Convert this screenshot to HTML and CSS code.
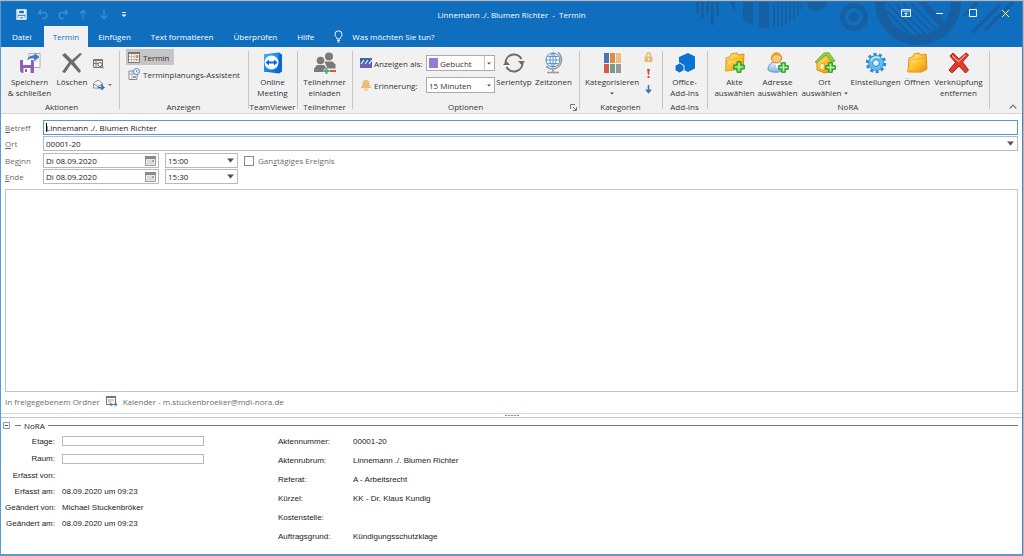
FILE: index.html
```html
<!DOCTYPE html>
<html lang="de">
<head>
<meta charset="utf-8">
<title>Linnemann ./. Blumen Richter - Termin</title>
<link rel="stylesheet" href="styles.css">
</head>
<body>
<svg class="defs" width="0" height="0" aria-hidden="true">
  <defs>
    <linearGradient id="gold" x1="0" y1="0" x2="1" y2="1"><stop offset="0" stop-color="#fff09a"/><stop offset=".5" stop-color="#fdc02c"/><stop offset="1" stop-color="#e58e10"/></linearGradient>
    <linearGradient id="tv" x1="0" y1="0" x2="1" y2="1"><stop offset="0" stop-color="#35b5fb"/><stop offset="1" stop-color="#0865dd"/></linearGradient>
    <linearGradient id="person" x1="0" y1="0" x2="0" y2="1"><stop offset="0" stop-color="#e4f1fc"/><stop offset="1" stop-color="#7fb4e6"/></linearGradient>
    <symbol id="plus" viewBox="0 0 12 12"><path d="M4 .7h4V4h3.300v4H8v3.300H4V8H.7V4H4z" fill="#5fcb45" stroke="#1f8f2a"/><path d="M6 2v8M2 6h8" stroke="#c8f5a9" stroke-width="1.200"/></symbol>
    <symbol id="cal" viewBox="0 0 11 10"><path d="M.5 .5h10v9H.5z" fill="#e9e9e9" stroke="#999"/><path d="M0 0h11v3H0z" fill="#8a8a8a"/><path d="M2 5h7M2 7h7" stroke="#c9c9c9"/><path d="M7 4h2v2H7z" fill="#f09050"/></symbol>
    <symbol id="down" viewBox="0 0 8 5"><path d="M0 0h8L4 5z" fill="#555"/></symbol>
  </defs>
</svg>
<div class="window">
  <header class="top">
    <svg class="pattern" viewBox="0 0 332 45" width="332" height="45" fill="#165fa3" aria-hidden="true">
      <path d="M6 0h3v11H6zM11 0h3v17h-3zM16 0h3v12h-3zM26 0h3v14h-3zM21 0h3v23h-3z"/>
      <path d="M40 0h5v10zM53 0h10v23q-6-2-10-6zM69 0h10v26H69zM83 0h2v26h-2zM87 0h2v25h-2zM91 0h2v24h-2zM95 0h2v22h-2zM99 0h2v20h-2zM103 0h2v17h-2zM107 0h2v13h-2zM111 0h1v9h-1z"/>
      <circle cx="127" cy="-1" r="10"/>
      <circle cx="164" cy="15" r="11.500" fill="none" stroke="#165fa3" stroke-width="5"/><circle cx="164" cy="15" r="5"/>
      <circle cx="228" cy="0" r="38" fill="none" stroke="#165fa3" stroke-width="10"/>
      <path d="M196 8l24 24M198 2l31 31M206 2l30 31M213 2l28 28M221 2l25 25" stroke="#165fa3" stroke-width="2"/>
      <path d="M228 0h8l23 23-7 5z"/>
      <path d="M274 14L288 0M282 31L310 3M295 28L323 0" stroke="#165fa3" stroke-width="3.500"/>
    </svg>
    <div class="titlebar">
      <div class="quick">
        <button aria-label="Speichern"><svg width="11" height="11" viewBox="0 0 11 11"><path d="M1 1h9v9H1zM2.500 1v4h6V1M3 10V7.500h5V10" fill="none" stroke="#fff" stroke-width="1.300"/></svg></button>
        <button aria-label="Rückgängig"><svg width="11" height="11" viewBox="0 0 11 11"><path d="M4 1L1.500 3.500 4 6M1.500 3.500H7a2.800 2.800 0 0 1 0 5.800H5" fill="none" stroke="#3d8fd4" stroke-width="1.300"/></svg></button>
        <button aria-label="Wiederholen"><svg width="11" height="11" viewBox="0 0 11 11"><path d="M7 1l2.500 2.500L7 6M9.500 3.500H4a2.800 2.800 0 0 0 0 5.800h2" fill="none" stroke="#3d8fd4" stroke-width="1.300"/></svg></button>
        <button aria-label="Vorheriges Element"><svg width="11" height="11" viewBox="0 0 11 11"><path d="M4 10V1.500M1 4.500l3-3 3 3" fill="none" stroke="#3d8fd4" stroke-width="1.300"/></svg></button>
        <button aria-label="Nächstes Element"><svg width="11" height="11" viewBox="0 0 11 11"><path d="M4 1v8.500M1 6.500l3 3 3-3" fill="none" stroke="#3d8fd4" stroke-width="1.300"/></svg></button>
        <button aria-label="Symbolleiste anpassen"><svg width="11" height="11" viewBox="0 0 11 11"><path d="M1 3.500h4" stroke="#fff"/><path d="M.5 5.500h5L3 8z" fill="#fff"/></svg></button>
      </div>
      <h1>Linnemann ./. Blumen Richter &nbsp;-&nbsp; Termin</h1>
      <div class="winbtns">
        <button aria-label="Menüband-Anzeigeoptionen"><svg width="11" height="9" viewBox="0 0 11 9"><path d="M.5 .5h9v7h-9zM.5 2h9" fill="none" stroke="#e4effa"/><path d="M5 7V4M3.500 5L5 3.500 6.500 5" fill="none" stroke="#fff"/></svg></button>
        <button aria-label="Minimieren"><svg width="9" height="9" viewBox="0 0 9 9"><path d="M1 4.500h7" stroke="#fff"/></svg></button>
        <button aria-label="Maximieren"><svg width="9" height="9" viewBox="0 0 9 9"><path d="M1.500 .5h7v7h-7z" fill="none" stroke="#fff"/></svg></button>
        <button aria-label="Schließen"><svg width="9" height="9" viewBox="0 0 9 9"><path d="M1 1l7 7M8 1L1 8" stroke="#fff"/></svg></button>
      </div>
    </div>
    <nav class="tabs">
      <button>Datei</button><button class="active">Termin</button><button>Einfügen</button><button>Text formatieren</button><button>Überprüfen</button><button>Hilfe</button>
      <button class="tell"><svg width="9" height="13" viewBox="0 0 9 13"><path d="M3 9V8C2 7 1 6 1 4.300a3.500 3.500 0 0 1 7 0C8 6 7 7 6 8v1zM3 10.500h3M3.500 12h2" fill="none" stroke="#fff"/></svg>Was möchten Sie tun?</button>
    </nav>
  </header>

  <section class="ribbon">
    <div class="group g-actions">
      <div class="tools">
        <button class="big w50"><svg viewBox="0 0 22 22"><path d="M10 1.500h11v14H10z" fill="#fff" stroke="#aaa"/><path d="M12 6h7M12 9h7" stroke="#ccc"/><path d="M1 8h14v13H3l-2-2z" fill="#8f5cc0"/><path d="M4 8h8v5H4zM4.500 16h7v5h-7z" fill="#fff"/><path d="M6 17h2v3H6z" fill="#8f5cc0"/><path d="M8 9c0-4 3-6 7-6V0l6 5-6 5V7c-3-.5-5 0-7 2z" fill="#3e7fc1" stroke="#fff" stroke-width=".6"/></svg><span>Speichern<br>&amp; schließen</span></button>
        <button class="big w34"><svg viewBox="0 0 22 22"><path d="M1 3l3-2 7 7 8-7 2 1-8 8 7 9-2 2-8-9-6 9-3-1 7-10z" fill="#6b6b6b"/></svg><span>Löschen</span></button>
        <div class="minis two">
          <button aria-label="In Kalender kopieren"><svg width="11" height="11" viewBox="0 0 11 11"><path d="M.5 1.500h9v8h-9zM0 2.500h10M3 3v6M.5 5.500h5" fill="none" stroke="#777"/><circle cx="7" cy="6.500" r="2" fill="#fff" stroke="#666"/><path d="M8.500 8l2.500 2.500" stroke="#666"/></svg></button>
          <button aria-label="Weiterleiten"><svg width="19" height="11" viewBox="0 0 19 11"><path d="M.5 4.500L5 1l4.500 3.500V9h-9zM.5 5L5 7.500 9.500 5" fill="#fff" stroke="#888"/><path d="M5 8.500h5M8 6l3 2.500L8 11" fill="none" stroke="#2d74bd" stroke-width="1.300"/><path d="M15 5h4l-2 2z" fill="#777"/></svg></button>
        </div>
      </div>
      <div class="caption">Aktionen</div>
    </div>
    <div class="group g-show">
      <div class="tools list">
        <button class="row on"><svg viewBox="0 0 12 12"><path d="M.5 1.500h11v10H.5z" fill="#fff" stroke="#777"/><path d="M0 1h12v2H0z" fill="#777"/><path d="M1 5.500h6M1 8.500h10M3.500 3v8M6 3v8" stroke="#bbb"/><path d="M7.500 4h3v3h-3zM7.500 8h2v2h-2z" fill="#ee8b4a"/></svg>Termin</button>
        <button class="row"><svg viewBox="0 0 12 12"><path d="M1 3h8v8.500H1z" fill="#fff" stroke="#888"/><path d="M1 6h8M4 3v8" stroke="#aaa"/><path d="M5 9h3" stroke="#8f5cc0" stroke-width="1.500"/><circle cx="8.500" cy="3.500" r="3" fill="#fff" stroke="#3e7fc1"/><path d="M8.500 2v2H10" fill="none" stroke="#3e7fc1" stroke-width=".8"/></svg>Terminplanungs-Assistent</button>
      </div>
      <div class="caption">Anzeigen</div>
    </div>
    <div class="group g-tv">
      <div class="tools center">
        <button class="big w34"><svg viewBox="0 0 22 22"><path d="M2 2.500L17 .5l3 2v17l-3 2-15-2z" fill="#0b65d8"/><path d="M2 2.500L17 1v19L2 19.500z" fill="url(#tv)"/><circle cx="9.500" cy="10.500" r="7" fill="#fff"/><path d="M3.500 10.500L7 7.500v2h5v-2l3.500 3-3.500 3v-2H7v2z" fill="#0868dc"/></svg><span>Online<br>Meeting</span></button>
      </div>
      <div class="caption">TeamViewer</div>
    </div>
    <div class="group g-part">
      <div class="tools center">
        <button class="big w50"><svg viewBox="0 0 22 22" fill="#7a7a7a"><circle cx="15" cy="4.500" r="4"/><path d="M10.500 9.500h8l3 3v4h-8z"/><circle cx="6.500" cy="8.500" r="3.800"/><path d="M0 20v-3.500l3-3.500h7l3 3.500V20z"/><path d="M9.500 19.500h6M12.500 16.500v5.500" stroke="#f1f1f1" stroke-width="4"/><path d="M9.500 19h6M12.500 16v6" stroke="#56a389" stroke-width="2"/><path d="M16 19h6" stroke="#dc5340" stroke-width="2"/></svg><span>Teilnehmer<br>einladen</span></button>
      </div>
      <div class="caption">Teilnehmer</div>
    </div>
    <div class="group g-opt">
      <div class="tools">
        <div class="options">
          <svg viewBox="0 0 12 12"><path d="M0 7h12v4H0z" fill="#7658b5"/><path d="M0 1h12v6H0z" fill="#3c67a8"/><path d="M1 7l3-4M5 7l3-4M9 7l3-4" stroke="#fff" stroke-width="1.200"/></svg>
          <label for="show">Anzeigen als:</label>
          <div class="sel swatch"><select id="show"><option>Gebucht</option></select><i></i><svg width="4" height="3" viewBox="0 0 8 5"><use href="#down"/></svg></div>
          <svg viewBox="0 0 12 12"><path d="M6 1c3 0 3.500 2 3.500 5l2 3H.5l2-3C2.500 3 3 1 6 1zM4.500 9.500h3v2h-3z" fill="#e9be7c"/></svg>
          <label for="remind">Erinnerung:</label>
          <div class="sel"><select id="remind"><option>15 Minuten</option></select><svg width="4" height="3" viewBox="0 0 8 5"><use href="#down"/></svg></div>
        </div>
        <button class="big w38"><svg viewBox="0 0 22 22"><path d="M2.500 11A8.500 8.500 0 0 1 18.500 7M19.500 11A8.500 8.500 0 0 1 3.500 15" fill="none" stroke="#6b6b6b" stroke-width="2"/><path d="M22 9l-3.500 4-3.500-4zM0 13l3.500-4L7 13z" fill="#6b6b6b"/></svg><span>Serientyp</span></button>
        <button class="big w40"><svg viewBox="0 0 22 22"><circle cx="10" cy="8" r="7" fill="#f3f8fd" stroke="#4a84c4"/><path d="M3 8h14M4.500 4.500h11M4.500 11.500h11M10 1v14M10 1c-4 4-4 10 0 14M10 1c4 4 4 10 0 14" fill="none" stroke="#4a84c4" stroke-width=".8"/><path d="M15 0c6 6 4 16-5 17-3 0-5-1-7-3M10 17v3M4 20.500h12" fill="none" stroke="#999" stroke-width="1.500"/></svg><span>Zeitzonen</span></button>
      </div>
      <div class="caption">Optionen</div>
      <button class="launcher" aria-label="Optionen öffnen"><svg width="7" height="7" viewBox="0 0 7 7"><path d="M.5 5V.5H5M3 3l3 3M6.500 3v3.500H3" fill="none" stroke="#777"/></svg></button>
    </div>
    <div class="group g-cat">
      <div class="tools">
        <button class="big w60"><svg viewBox="0 0 22 22"><path d="M3 1h5v10H3z" fill="#4678ac"/><path d="M9 1h5v10H9z" fill="#e18a43"/><path d="M15 1h5v10h-5z" fill="#e8c080"/><path d="M3 12h5v9H3z" fill="#d85b49"/><path d="M9 12h5v9H9z" fill="#69a18c"/><path d="M15 12h5v9h-5z" fill="#999"/></svg><span>Kategorisieren<br><svg class="tiny" viewBox="0 0 8 5"><use href="#down"/></svg></span></button>
        <div class="minis three">
          <button aria-label="Privat"><svg width="9" height="11" viewBox="0 0 9 11"><path d="M2.500 5V3a2 2 0 0 1 4 0v2" fill="none" stroke="#e7bb76" stroke-width="1.500"/><path d="M.5 4.500h8V10h-8z" fill="#e7bb76"/><path d="M4.500 6v2.500" stroke="#fff"/></svg></button>
          <button aria-label="Wichtigkeit: hoch"><svg width="9" height="11" viewBox="0 0 9 11"><path d="M3 1h3l-1 6H4zM3.500 8h2v2h-2z" fill="#dc4a37"/></svg></button>
          <button aria-label="Wichtigkeit: niedrig"><svg width="9" height="11" viewBox="0 0 9 11"><path d="M4.500 1v7M2 5.500l2.500 3 2.500-3" fill="none" stroke="#3574b9" stroke-width="1.600"/></svg></button>
        </div>
      </div>
      <div class="caption">Kategorien</div>
    </div>
    <div class="group g-add">
      <div class="tools center">
        <button class="big w34"><svg viewBox="0 0 22 22" fill="#0a72d0"><path d="M14 1l7 3.500v12L14 20l-4-2v-5l-5-1V5z"/><path d="M5.500 11l4.500 2.500v5L5.500 21 1 18.500v-5z" stroke="#f1f1f1"/></svg><span>Office-<br>Add-Ins</span></button>
      </div>
      <div class="caption">Add-Ins</div>
    </div>
    <div class="group g-nora">
      <div class="tools">
        <button class="big w43"><svg viewBox="0 0 22 22"><path d="M2 6l4-1 1-3 6-1 1 2 6-1-1 14L2 19z" fill="url(#gold)" stroke="#df9212"/><path d="M1 19L4 8l15-2-1 11z" fill="url(#gold)" stroke="#eaa41c" stroke-width=".7"/><use href="#plus" x="9" y="9" width="12" height="12"/></svg><span>Akte<br>auswählen</span></button>
        <button class="big w43"><svg viewBox="0 0 22 22"><path d="M1 18c0-6 4-8 8-8s8 2 8 8c-5 3-12 3-16 0z" fill="url(#person)" stroke="#5f9bd3"/><path d="M8 10l2 7 3-7z" fill="#fff"/><circle cx="9.500" cy="6" r="5" fill="#f9c778" stroke="#c98215"/><path d="M4.500 6c0-7 10-7 10 0-2-3-6-4-10 0z" fill="#eaa01f"/><use href="#plus" x="11" y="10" width="11" height="11"/></svg><span>Adresse<br>auswählen</span></button>
        <button class="big w50"><svg viewBox="0 0 22 22"><path d="M3 9l9-7 6 7v10l-7 2-8-3z" fill="url(#gold)" stroke="#cf8b12"/><path d="M1 10l9-9 5-.3L21 9l-3 1-6-7-9 8z" fill="#8fd04b" stroke="#579b24" stroke-width=".7"/><path d="M6 12l4-1v7l-4-1z" fill="#fff6bb" stroke="#cf8b12" stroke-width=".6"/><use href="#plus" x="11" y="10" width="11" height="11"/></svg><span>Ort<br>auswählen <svg class="tiny" viewBox="0 0 8 5"><use href="#down"/></svg></span></button>
        <button class="big w50"><svg viewBox="0 0 22 22"><circle cx="11" cy="11" r="8.700" fill="none" stroke="#2d87d1" stroke-width="3" stroke-dasharray="3 2.460"/><circle cx="11" cy="11" r="7.500" fill="#64b9f1" stroke="#3793da"/><path d="M6 9a6 6 0 0 1 9-3" fill="none" stroke="#c4e8ff" stroke-width="1.500"/><circle cx="11" cy="11" r="3.300" fill="#f1f1f1" stroke="#2d87d1"/></svg><span>Einstellungen</span></button>
        <button class="big w30"><svg viewBox="0 0 22 22"><path d="M3 6l4-1 1-3 5-1 2 2 5-1 1 15-6 3H2z" fill="url(#gold)" stroke="#df9212"/><path d="M1.500 19L5 8l14-2 1 12-5 2z" fill="url(#gold)" stroke="#eaa41c" stroke-width=".7"/></svg><span>Öffnen</span></button>
        <button class="big w50"><svg viewBox="0 0 22 22"><path d="M2 4l3-3 6 6 7-6 2.500 2-6 7 6 8-3 3-6.500-7-7 7-3-3 6.500-7.500z" fill="#e23a30" stroke="#a91b18"/><path d="M4 3.500l6.500 6 7-6.500" fill="none" stroke="#f79a8f" stroke-width="1.200"/></svg><span>Verknüpfung<br>entfernen</span></button>
      </div>
      <div class="caption">NoRA</div>
    </div>
    <div class="group last"><button class="collapse" aria-label="Menüband reduzieren"><svg width="8" height="5" viewBox="0 0 8 5"><path d="M.7 4.500L4 1l3.300 3.500" fill="none" stroke="#777" stroke-width="1.200"/></svg></button></div>
  </section>

  <main class="form">
    <div class="line"><label for="subject"><u>B</u>etreff</label><div class="field focus"><input id="subject" type="text" value="Linnemann ./. Blumen Richter"><b class="caret"></b></div></div>
    <div class="line"><label for="place"><u>O</u>rt</label><div class="field"><input id="place" type="text" value="00001-20"><button aria-label="Orte anzeigen"><svg width="7" height="5" viewBox="0 0 8 5"><use href="#down"/></svg></button></div></div>
    <div class="line first-date"><label for="start">Beg<u>i</u>nn</label><div class="field date"><input id="start" type="text" value="Di 08.09.2020"><button aria-label="Beginn wählen"><svg width="11" height="10"><use href="#cal"/></svg></button></div><div class="field time"><select aria-label="Beginn Uhrzeit"><option>15:00</option></select><svg width="7" height="5" viewBox="0 0 8 5"><use href="#down"/></svg></div><label class="allday"><input type="checkbox"><span>Gan<u>z</u>tägiges Ereignis</span></label></div>
    <div class="line"><label for="end"><u>E</u>nde</label><div class="field date"><input id="end" type="text" value="Di 08.09.2020"><button aria-label="Ende wählen"><svg width="11" height="10"><use href="#cal"/></svg></button></div><div class="field time"><select aria-label="Ende Uhrzeit"><option>15:30</option></select><svg width="7" height="5" viewBox="0 0 8 5"><use href="#down"/></svg></div></div>
    <textarea aria-label="Beschreibung"></textarea>
    <div class="folder"><span>In freigegebenem Ordner</span><svg width="11" height="11" viewBox="0 0 11 11"><path d="M.5 .5h9v8h-9z" fill="#fff" stroke="#777"/><path d="M0 0h10v2H0z" fill="#777"/><path d="M2 4h6M2 6h3" stroke="#e48b50"/><path d="M4 8.500h7M6 6.500l-2 2 2 2M9 6.500l2 2-2 2" fill="none" stroke="#2d74bd"/></svg><span>Kalender - m.stuckenbroeker@mdi-nora.de</span></div>
  </main>
  <div class="splitter"><i></i><i></i><i></i><i></i><i></i></div>

  <section class="nora">
    <div class="head"><button aria-label="NoRA zuklappen"><svg width="7" height="7" viewBox="0 0 7 7"><path d="M.5 .5h6v6h-6z" fill="#fff" stroke="#8b98a8"/><path d="M2 3.500h3" stroke="#3c5a8c"/></svg></button><hr class="stub"><h2>NoRA</h2><hr></div>
    <div class="cols">
      <div class="left">
        <label for="floor" class="tall">Etage:</label><span class="tall"><input id="floor" type="text"></span>
        <label for="room" class="tall">Raum:</label><span class="tall"><input id="room" type="text"></span>
        <span>Erfasst von:</span><span></span>
        <span>Erfasst am:</span><span>08.09.2020 um 09:23</span>
        <span>Geändert von:</span><span>Michael Stuckenbröker</span>
        <span>Geändert am:</span><span>08.09.2020 um 09:23</span>
      </div>
      <dl class="right">
        <dt>Aktennummer:</dt><dd>00001-20</dd>
        <dt>Aktenrubrum:</dt><dd>Linnemann ./. Blumen Richter</dd>
        <dt>Referat:</dt><dd>A - Arbeitsrecht</dd>
        <dt>Kürzel:</dt><dd>KK - Dr. Klaus Kundig</dd>
        <dt>Kostenstelle:</dt><dd></dd>
        <dt>Auftragsgrund:</dt><dd>Kündigungsschutzklage</dd>
      </dl>
    </div>
  </section>
</div>
</body>
</html>
```
FILE: styles.css
```css
* { box-sizing: border-box; }
body { margin: 0; background: #b4b8bc; font: 8px/11px "Open Sans", "Noto Sans", sans-serif; color: #333; }
button, input, select, textarea { font: inherit; color: inherit; margin: 0; padding: 0; border: 0; background: none; border-radius: 0; outline: 0; appearance: none; }
button { white-space: nowrap; }
svg { display: block; flex: none; }
h1, h2, dl, dd { margin: 0; font-weight: 400; font-size: inherit; }
.defs { position: absolute; }

.window { display: flex; flex-direction: column; min-height: calc(100vh - 1px); margin: 1px 1px 0 0; background: #fff; border: 1px solid #5b9bd5; border-top: 0; border-right-color: #3f86c4; border-bottom-width: 2px; }

.top { position: relative; background: #106ebe; color: #fff; border-top: 1px solid #2a73b4; overflow: hidden; }
.pattern { position: absolute; right: 0; top: 0; }
.titlebar { position: relative; display: grid; grid-template-columns: 1fr auto 1fr; align-items: center; height: 24px; }
.titlebar button { display: grid; place-items: center; }
.quick { display: flex; gap: 10px; padding-left: 15px; }
.winbtns { display: flex; justify-content: flex-end; padding-bottom: 2px; }
.winbtns button { width: 33px; height: 20px; }
.tabs { position: relative; display: flex; height: 21px; }
.tabs button { padding: 0 10px; height: 21px; }
.tabs button:first-child { padding: 0 12px 0 11px; }
.tabs .active { background: #f1f1f1; color: #106ebe; padding: 0 9px; }
.tabs .tell { display: flex; align-items: center; gap: 9px; }

.ribbon { display: flex; height: 67px; background: #f1f1f1; border-bottom: 1px solid #d5d5d5; }
.group { position: relative; display: flex; flex-direction: column; flex: none; }
.group + .group::before { content: ""; position: absolute; left: 0; top: 4px; bottom: 4px; border-left: 1px solid #c6c6c6; }
.tools { display: flex; flex: 1; }
.center { justify-content: center; }
.caption { text-align: center; line-height: 13px; }
.g-actions { width: 118px; padding-left: 3px; }
.g-show { width: 129px; }
.g-tv { width: 49px; }
.g-part { width: 55px; }
.g-opt { width: 227px; }
.g-cat { width: 83px; }
.g-add { width: 45px; }
.g-nora { width: 282px; }
.g-cat .tools { padding-left: 3px; }
.g-nora .tools { padding-left: 6px; }
.last { flex: 1; align-items: flex-end; justify-content: flex-end; padding: 0 5px 4px 0; }

.big { display: flex; flex-direction: column; align-items: center; gap: 2px; padding-top: 5px; }
.big > svg { width: 22px; height: 22px; }
.tiny { display: inline-block; width: 4px; height: 3px; vertical-align: middle; }
.w30 { width: 32px; } .w34 { width: 34px; } .w38 { width: 38px; } .w40 { width: 41px; } .w43 { width: 43px; } .w50 { width: 51px; } .w60 { width: 60px; }
.minis { display: flex; flex-direction: column; align-items: flex-start; padding: 11px 0 0 4px; }
.two { gap: 10px; }
.three { gap: 5px; padding: 5px 0 0 2px; }

.list { flex-direction: column; align-items: flex-start; gap: 1px; padding: 2px 0 0 7px; }
.row { display: flex; align-items: center; gap: 3px; height: 16px; padding: 0 4px 0 2px; }
.row svg { width: 12px; height: 12px; }
.on { background: #c5c5c5; }

.options { display: grid; grid-template-columns: 12px 50px 69px; column-gap: 2px; row-gap: 6px; align-content: start; align-items: center; padding: 8px 0 0 8px; }
.options > svg { width: 12px; height: 12px; }
.options label { white-space: nowrap; }
.sel { position: relative; background: #fff; border: 1px solid #ababab; height: 16px; display: flex; }
.sel select { width: 100%; padding-left: 2px; }
.sel > svg { position: absolute; right: 3px; top: 6px; }
.swatch select { padding-left: 13px; }
.swatch i { position: absolute; left: 2px; top: 2px; width: 9px; height: 10px; background: #967bd1; }
.swatch::after { content: ""; position: absolute; right: 9px; top: 0; bottom: 0; border-left: 1px solid #c6c6c6; }
.launcher { position: absolute; right: 2px; bottom: 2px; }

.form { display: flex; flex-direction: column; flex: 1; gap: 1px; padding: 6px 4px 0; color: #6b6b6b; }
.line { display: flex; align-items: center; }
.line > label:first-child { width: 38px; flex: none; }
.first-date { margin-top: 1px; }
.field { position: relative; display: flex; align-items: center; flex: 1; height: 15px; border: 1px solid #b8b8c0; color: #222; background: #fff; }
.field input, .field select { flex: 1; min-width: 0; height: 13px; padding-left: 2px; }
.field button { padding: 0 3px; }
.field.date button { padding: 0 2px; }
.focus { border-color: #4f9bd9; }
.caret { position: absolute; left: 2px; top: 2px; width: 1px; height: 9px; background: #000; }
.date { flex: none; width: 116px; }
.time { flex: none; width: 73px; margin-left: 6px; }
.time svg { position: absolute; right: 3px; }
.allday { display: flex; align-items: center; gap: 4px; margin-left: 6px; }
.allday input { width: 10px; height: 10px; border: 1px solid #888; background: #fff; }
textarea { flex: 1; width: 100%; min-height: 80px; margin-top: 4px; border: 1px solid #c3c3cb; resize: none; background: #fff; }
.folder { display: flex; align-items: center; gap: 6px; height: 20px; padding-bottom: 4px; }
.splitter { display: flex; justify-content: center; align-items: center; gap: 1px; height: 5px; border-top: 1px solid #d8d8e0; border-bottom: 1px solid #c6c6cc; }
.splitter i { width: 2px; height: 1px; background: #5c93d0; }

.nora { padding: 2px 4px 8px 2px; font: 8px/11px "Liberation Sans", Arial, sans-serif; color: #222; }
.head { display: flex; align-items: center; gap: 3px; height: 11px; }
.head h2 { font-family: "Open Sans", sans-serif; }
.head hr { flex: 1; margin: 0; border: 0; border-top: 1px solid #777; }
.head .stub { flex: none; width: 6px; margin-left: 2px; }
.cols { display: flex; gap: 74px; padding-left: 2px; }
.left { display: grid; grid-template-columns: 50px 142px; column-gap: 7px; grid-template-rows: 18px 17px 16px 16px 16px 16px; align-items: center; align-content: start; margin-top: 1px; }
.left > :nth-child(odd) { text-align: right; white-space: nowrap; }
.left input { display: block; width: 100%; height: 10px; border: 1px solid #b8b8c0; }
.right { display: grid; grid-template-columns: 75px auto; grid-auto-rows: 19px; align-items: center; margin-top: 1px; }
```
